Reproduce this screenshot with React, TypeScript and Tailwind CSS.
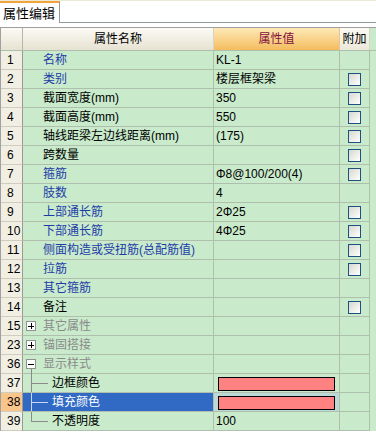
import React from "react";

type Row = {
  no: string;
  name: string;
  value?: string;
  tone: "blue" | "black" | "grey";
  check?: boolean;
  group?: "+" | "-";
  tree?: "mid" | "last";
  color?: boolean;
  selected?: boolean;
};

const rows: Row[] = [
  { no: "1", name: "名称", value: "KL-1", tone: "blue" },
  { no: "2", name: "类别", value: "楼层框架梁", tone: "blue", check: true },
  { no: "3", name: "截面宽度(mm)", value: "350", tone: "black", check: true },
  { no: "4", name: "截面高度(mm)", value: "550", tone: "black", check: true },
  { no: "5", name: "轴线距梁左边线距离(mm)", value: "(175)", tone: "black", check: true },
  { no: "6", name: "跨数量", value: "", tone: "black", check: true },
  { no: "7", name: "箍筋", value: "Φ8@100/200(4)", tone: "blue", check: true },
  { no: "8", name: "肢数", value: "4", tone: "blue" },
  { no: "9", name: "上部通长筋", value: "2Φ25", tone: "blue", check: true },
  { no: "10", name: "下部通长筋", value: "4Φ25", tone: "blue", check: true },
  { no: "11", name: "侧面构造或受扭筋(总配筋值)", value: "", tone: "blue", check: true },
  { no: "12", name: "拉筋", value: "", tone: "blue", check: true },
  { no: "13", name: "其它箍筋", value: "", tone: "blue" },
  { no: "14", name: "备注", value: "", tone: "black", check: true },
  { no: "15", name: "其它属性", tone: "grey", group: "+" },
  { no: "23", name: "锚固搭接", tone: "grey", group: "+" },
  { no: "36", name: "显示样式", tone: "grey", group: "-" },
  { no: "37", name: "边框颜色", tone: "black", tree: "mid", color: true },
  { no: "38", name: "填充颜色", tone: "black", tree: "mid", color: true, selected: true },
  { no: "39", name: "不透明度", value: "100", tone: "black", tree: "last" },
];

const toneClass = {
  blue: "text-[#1e3ca8]",
  black: "text-black",
  grey: "text-[#8a8a8a]",
};

const CheckBox = () => (
  <div className="w-[13px] h-[13px] border border-[#1c5180] bg-gradient-to-br from-[#d8d8d0] to-white" />
);

const NameCell = ({ row }: { row: Row }) => {
  if (row.group) {
    return (
      <div className="relative flex items-center h-full pl-[3px]">
        <div className="w-[10px] h-[10px] border border-[#919191] bg-white flex items-center justify-center relative">
          <div className="absolute w-[6px] h-[1px] bg-black" />
          {row.group === "+" && <div className="absolute w-[1px] h-[6px] bg-black" />}
        </div>
        <span className={`ml-[7px] ${toneClass[row.tone]}`}>{row.name}</span>
        {row.group === "-" && (
          <div className="absolute left-[8px] top-[14px] bottom-[-1px] w-[1px] bg-[#8a8a8a]" />
        )}
      </div>
    );
  }
  if (row.tree) {
    const line = row.selected ? "bg-[#c8d8f0]" : "bg-[#8a8a8a]";
    return (
      <div
        className={`relative flex items-center h-full ${
          row.selected ? "bg-[#316ac5] text-white" : toneClass[row.tone]
        }`}
      >
        <div
          className={`absolute left-[8px] top-0 w-[1px] ${line} ${
            row.tree === "last" ? "h-[9px]" : "h-full"
          }`}
        />
        <div className={`absolute left-[8px] top-[9px] w-[17px] h-[1px] ${line}`} />
        <span className="ml-[29px]">{row.name}</span>
      </div>
    );
  }
  return (
    <div className={`flex items-center h-full pl-[20px] ${toneClass[row.tone]}`}>
      <span className="whitespace-nowrap">{row.name}</span>
    </div>
  );
};

export default function App() {
  return (
    <div
      className="w-[376px] h-[434px] overflow-hidden bg-white text-[12px] leading-none"
      style={{ fontFamily: "'Liberation Sans', 'Noto Sans CJK SC', sans-serif" }}
    >
      {/* tab strip */}
      <div className="h-[1px] bg-[#ece9d8]" />
      <div className="flex h-[22px] border-b border-[#919b9c]">
        <div className="w-[60px] -mb-[1px] bg-white border-t-2 border-t-[#f2a33a] border-r border-r-[#919b9c] flex items-center pl-[3px] text-[13px] text-black">
          属性编辑
        </div>
        <div className="flex-1" />
      </div>
      <div className="h-[4px]" />

      {/* grid */}
      <div className="border-t border-l border-[#a0a0a0] bg-[#c9ebcc]">
        <div className="flex h-[23px] border-b border-[#aebfae]">
          <div className="w-[22px] border-r border-[#b8b5a6] bg-gradient-to-b from-[#fbfaf4] to-[#e7e3d2]" />
          <div className="w-[191px] border-r border-[#d9d5c5] bg-gradient-to-b from-[#fbfaf4] to-[#e7e3d2] flex items-center justify-center text-black">
            属性名称
          </div>
          <div className="w-[126px] border-r border-[#e0c89a] bg-gradient-to-b from-[#fde9b6] to-[#f4bc5c] flex items-center justify-center text-[#84103c]">
            属性值
          </div>
          <div className="w-[30px] border-r border-[#d9d5c5] bg-gradient-to-b from-[#fbfaf4] to-[#ebe8da] flex items-center justify-center text-black">
            附加
          </div>
          <div className="flex-1 bg-[#c9ebcc]" />
        </div>

        {rows.map((row) => (
          <div key={row.no} className="flex h-[19px]">
            <div
              className={`w-[22px] border-r border-b border-r-[#9a9a8e] border-b-[#d0cdbf] flex items-center pl-[6px] text-black ${
                row.selected ? "bg-[#f8c58b]" : "bg-[#f1efe3]"
              }`}
            >
              {row.no}
            </div>
            <div className="w-[191px] border-r border-b border-[#aebfae]">
              <NameCell row={row} />
            </div>
            <div
              className={`w-[126px] border-r border-b border-[#aebfae] flex items-center ${
                row.selected ? "bg-[#bcd9d6]" : ""
              }`}
            >
              {row.color ? (
                <div className="ml-[4px] mt-[1px] w-[117px] h-[14px] border border-black bg-[#ff8282]" />
              ) : (
                <span className="pl-[2px] text-black whitespace-nowrap">{row.value}</span>
              )}
            </div>
            <div className="w-[30px] border-r border-b border-[#aebfae] flex items-center justify-center">
              {row.check && <CheckBox />}
            </div>
            <div className="flex-1" />
          </div>
        ))}
      </div>
    </div>
  );
}
